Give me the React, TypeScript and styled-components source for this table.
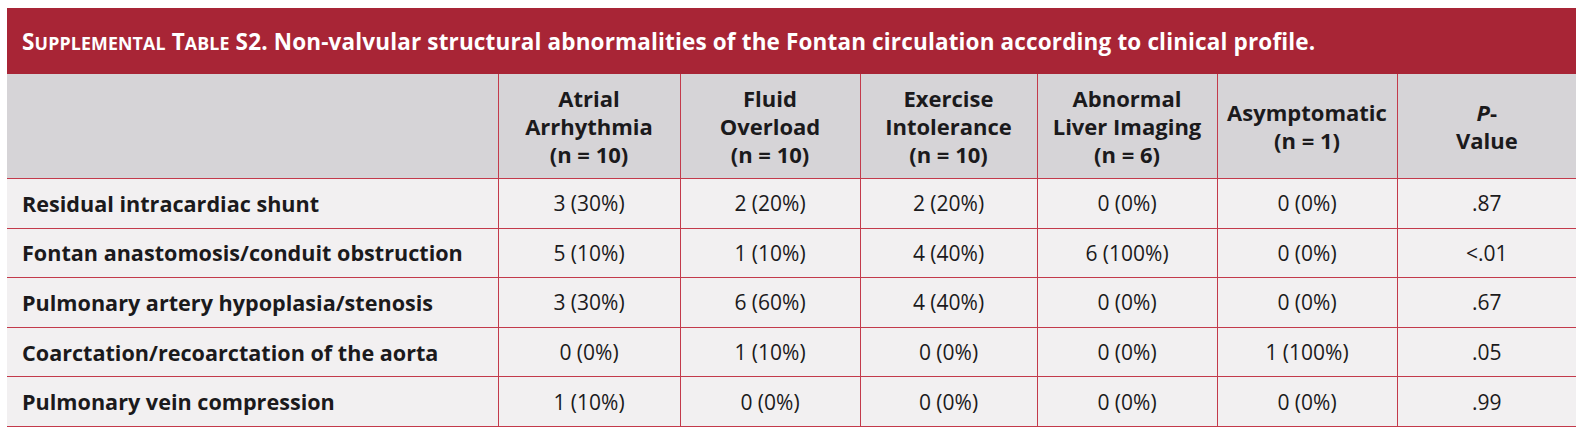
import React from 'react'
import styled, { createGlobalStyle } from 'styled-components'

const GlobalStyle = createGlobalStyle`
  html, body {
    margin: 0;
    padding: 0;
    background: #ffffff;
  }
  body {
    font-family: "Open Sans", Lato, "Liberation Sans", sans-serif;
  }
`

const colors = {
  title: '#a82536',
  header: '#d6d4d7',
  body: '#f2f0f1',
  line: '#c33a4b',
  text: '#1b1a1c',
}

type Row = {
  label: string
  values: string[]
}

const columns = [
  ['Atrial', 'Arrhythmia', '(n = 10)'],
  ['Fluid', 'Overload', '(n = 10)'],
  ['Exercise', 'Intolerance', '(n = 10)'],
  ['Abnormal', 'Liver Imaging', '(n = 6)'],
  ['Asymptomatic', '(n = 1)'],
]

const rows: Row[] = [
  { label: 'Residual intracardiac shunt', values: ['3 (30%)', '2 (20%)', '2 (20%)', '0 (0%)', '0 (0%)', '.87'] },
  { label: 'Fontan anastomosis/conduit obstruction', values: ['5 (10%)', '1 (10%)', '4 (40%)', '6 (100%)', '0 (0%)', '<.01'] },
  { label: 'Pulmonary artery hypoplasia/stenosis', values: ['3 (30%)', '6 (60%)', '4 (40%)', '0 (0%)', '0 (0%)', '.67'] },
  { label: 'Coarctation/recoarctation of the aorta', values: ['0 (0%)', '1 (10%)', '0 (0%)', '0 (0%)', '1 (100%)', '.05'] },
  { label: 'Pulmonary vein compression', values: ['1 (10%)', '0 (0%)', '0 (0%)', '0 (0%)', '0 (0%)', '.99'] },
]

// small caps drawn by hand: first letter full size, the rest shrunk
const SmallCapsWord = ({ word }: { word: string }) => (
  <>
    {word[0]}
    <Shrunk>{word.slice(1).toUpperCase()}</Shrunk>
  </>
)

const App = () => {
  return (
    <>
      <GlobalStyle />
      <Page>
        <Table>
          <colgroup>
            <col style={{ width: 491 }} />
            {[182, 180, 177, 180, 180, 179].map((w, i) => (
              <col key={i} style={{ width: w }} />
            ))}
          </colgroup>
          <thead>
            <tr>
              <TitleCell colSpan={7}>
                <SmallCapsWord word="Supplemental" /> <SmallCapsWord word="Table" /> S2. Non-valvular structural
                abnormalities of the Fontan circulation according to clinical profile.
              </TitleCell>
            </tr>
            <tr>
              <HeaderCell />
              {columns.map((lines, i) => (
                <HeaderCell key={i}>
                  {lines.map((line) => (
                    <HeaderLine key={line}>{line}</HeaderLine>
                  ))}
                </HeaderCell>
              ))}
              <HeaderCell>
                <HeaderLine>
                  <Italic>P</Italic>-
                </HeaderLine>
                <HeaderLine>Value</HeaderLine>
              </HeaderCell>
            </tr>
          </thead>
          <tbody>
            {rows.map((row) => (
              <BodyRow key={row.label}>
                <LabelCell>{row.label}</LabelCell>
                {row.values.map((v, i) => (
                  <ValueCell key={i}>{v}</ValueCell>
                ))}
              </BodyRow>
            ))}
          </tbody>
        </Table>
      </Page>
    </>
  )
}

const Page = styled.div`
  padding: 8px 12px 0 7px;
`

const Table = styled.table`
  width: 1569px;
  border-collapse: collapse;
  table-layout: fixed;
  color: ${colors.text};
`

const TitleCell = styled.th`
  height: 66px;
  padding: 0 0 0 15px;
  background: ${colors.title};
  color: #ffffff;
  text-align: left;
  font-size: 22.5px;
  font-weight: 700;
  letter-spacing: 0.15px;
  white-space: nowrap;
`

const Shrunk = styled.span`
  font-size: 0.79em;
`

const HeaderCell = styled.th`
  height: 104px;
  padding: 0;
  background: ${colors.header};
  border-left: 1.5px solid ${colors.line};
  border-bottom: 1.5px solid ${colors.line};
  text-align: center;
  vertical-align: middle;
  font-size: 22px;
  font-weight: 700;
  line-height: 28px;

  &:first-child {
    border-left: none;
  }
`

const HeaderLine = styled.div`
  white-space: nowrap;
`

const Italic = styled.i`
  font-style: italic;
`

const BodyRow = styled.tr`
  height: 49.6px;
  background: ${colors.body};
  border-bottom: 1.5px solid ${colors.line};
`

const LabelCell = styled.td`
  padding: 0 0 0 15px;
  font-size: 21.6px;
  font-weight: 700;
  white-space: nowrap;
`

const ValueCell = styled.td`
  padding: 0;
  border-left: 1.5px solid ${colors.line};
  text-align: center;
  font-size: 21px;
  font-weight: 500;
`

export default App
